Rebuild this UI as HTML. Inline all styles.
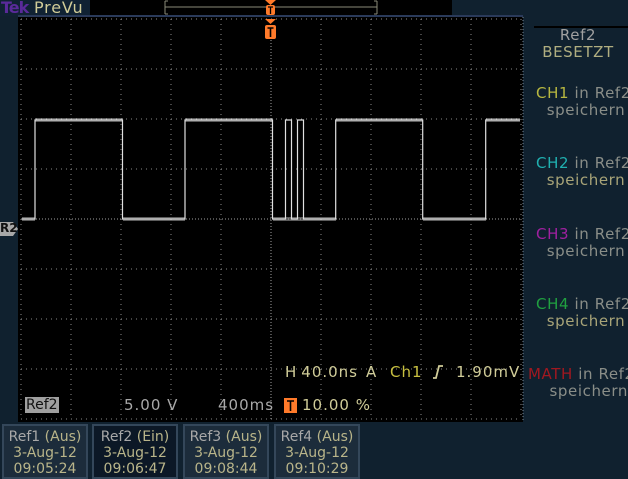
<!DOCTYPE html>
<html><head><meta charset="utf-8"><style>
body{margin:0;width:628px;height:479px;background:#10212f;overflow:hidden;position:relative;font-family:"DejaVu Sans","Liberation Sans",sans-serif}
.a{position:absolute;white-space:nowrap}
.btn{position:absolute;top:424px;height:55px;width:86px;background:#1c2c3b;border:2px solid #34475a;box-sizing:border-box;text-align:center;font-size:14px;line-height:16px;color:#b9b58a;padding-top:3px;white-space:nowrap;overflow:hidden}
.btn .g{color:#a8a8a8}
.rp{position:absolute;left:528px;width:100px;text-align:center;font-size:15px;line-height:17px;color:#8a8e88;white-space:nowrap;letter-spacing:.6px}
.t{position:absolute;top:363px;font-size:15px;color:#d0cc98;letter-spacing:1px;white-space:nowrap}
</style></head><body>
<div class="a" style="left:0;top:0;width:90px;height:16px;background:#102233"></div>
<div class="a" style="left:1px;top:-2px;font-size:16px;color:#5a2a9a;font-weight:bold;letter-spacing:-1px">Tek</div>
<div class="a" style="left:34px;top:-2px;font-size:16px;color:#d0cc98;letter-spacing:.8px">PreVu</div>
<div class="a" style="left:90px;top:0;width:362px;height:15px;background:#000"></div>
<div class="a" style="left:18px;top:15px;width:505px;height:2px;background:#2a3a5a"></div>
<svg class="a" style="left:0;top:0" width="628" height="479">
<path d="M165 1v13M165 1h3M165 14h3M377 1v13M377 1h-3M377 14h-3M165 7H377" stroke="#8a8a78" stroke-width="1" fill="none"/>
<rect x="18" y="17" width="505" height="405" fill="#000"/>
<g stroke="#8a8a8a" stroke-width="1" stroke-dasharray="1 4" fill="none">
<path d="M21 19v400M71 19v400M121 19v400M171 19v400M221 19v400M321 19v400M371 19v400M421 19v400M471 19v400M521 19v400"/>
<path d="M21 19h500M21 69h500M21 119h500M21 169h500M21 269h500M21 319h500M21 369h500M21 419h500"/>
</g>
<g stroke="#a0a0a0" stroke-width="1" stroke-dasharray="1 2" fill="none">
<path d="M271 19v400M21 219h500"/>
</g>
<rect x="35" y="118" width="88" height="4" fill="#ccc" opacity=".45"/>
<rect x="185" y="118" width="88" height="4" fill="#ccc" opacity=".45"/>
<rect x="336" y="118" width="87" height="4" fill="#ccc" opacity=".45"/>
<rect x="486" y="118" width="34" height="4" fill="#ccc" opacity=".45"/>
<rect x="22" y="217" width="13" height="4" fill="#ccc" opacity=".45"/>
<rect x="123" y="217" width="62" height="4" fill="#ccc" opacity=".45"/>
<rect x="273" y="217" width="63" height="4" fill="#ccc" opacity=".45"/>
<rect x="423" y="217" width="63" height="4" fill="#ccc" opacity=".45"/>
<path d="M22 219H35V120H122.5V219H185V120H272.5V219H285.5V120H291.5V219H297.5V120H303.5V219H335.7V120H422.7V219H485.7V120H520" stroke="#e0e0e0" stroke-width="1.2" fill="none"/>
<path d="M265 0h11l-5.5 5z" fill="#ff7a2a"/>
<rect x="266" y="5" width="9" height="10" rx="2" fill="#ff7a2a"/>
<path d="M268 7h5M270.5 7v7" stroke="#000" stroke-width="1.3"/>
<path d="M265 19h11l-5.5 5z" fill="#ff7a2a"/>
<rect x="265" y="25" width="11" height="14" rx="2" fill="#ff7a2a"/>
<path d="M267.5 28h6M270.5 28v9" stroke="#000" stroke-width="1.6"/>
<path d="M0 222h13l5 7-5 7H0z" fill="#a8a8a8"/>
<path d="M523 17v405" stroke="#7a8a98" stroke-dasharray="1 2"/>
<path d="M534 27h94" stroke="#000" stroke-width="2"/>
<rect x="284" y="398" width="13" height="15" fill="#ff7a2a"/>
<path d="M287 401h7M290.5 401v10" stroke="#000" stroke-width="1.6"/>
<path d="M433 378h3l3-12h4" stroke="#d0cc98" stroke-width="1.8" fill="none"/>
</svg>
<div class="a" style="left:0;top:221px;font-size:12px;color:#111;font-weight:bold">R2</div>
<div class="rp" style="top:27px;color:#a0a0a0">Ref2<br><span style="color:#b0ae80">BESETZT</span></div>
<div class="rp" style="top:85px;left:536px;text-align:left"><span style="color:#b8b840">CH1</span> in Ref2<br>&nbsp;&nbsp;speichern</div>
<div class="rp" style="top:155px;left:536px;text-align:left"><span style="color:#20b0b0">CH2</span> in Ref2<br>&nbsp;&nbsp;<span style="color:#a8a478">speichern</span></div>
<div class="rp" style="top:226px;left:536px;text-align:left"><span style="color:#a020a0">CH3</span> in Ref2<br>&nbsp;&nbsp;speichern</div>
<div class="rp" style="top:296px;left:536px;text-align:left"><span style="color:#20a040">CH4</span> in Ref2<br>&nbsp;&nbsp;<span style="color:#a8a478">speichern</span></div>
<div class="rp" style="top:366px;left:528px;text-align:left"><span style="color:#a01820">MATH</span> in Ref2<br>&nbsp;&nbsp;&nbsp;&nbsp;speichern</div>
<div class="t" style="left:285px">H&#8201;40.0ns</div>
<div class="t" style="left:366px">A</div>
<div class="t" style="left:390px;color:#c8c040">Ch1</div>
<div class="t" style="left:456px">1.90mV</div>
<div class="a" style="left:25px;top:397px;font-size:14px;line-height:16px;background:#a0a0a0;color:#111;padding:0 1px">Ref2</div>
<div class="a" style="left:124px;top:396px;font-size:15px;color:#a8a8a8;letter-spacing:1px">5.00 V</div>
<div class="a" style="left:218px;top:396px;font-size:15px;color:#a8a8a8;letter-spacing:1px">400ms</div>
<div class="a" style="left:302px;top:396px;font-size:15px;color:#d0cc98;letter-spacing:1px">10.00 %</div>
<div class="btn" style="left:2px"><span class="g">Ref1</span> (Aus)<br>3-Aug-12<br>09:05:24</div>
<div class="btn" style="left:92px;background:#0c1826"><span class="g">Ref2</span> (Ein)<br>3-Aug-12<br>09:06:47</div>
<div class="btn" style="left:183px"><span class="g">Ref3</span> (Aus)<br>3-Aug-12<br>09:08:44</div>
<div class="btn" style="left:274px"><span class="g">Ref4</span> (Aus)<br>3-Aug-12<br>09:10:29</div>
</body></html>
